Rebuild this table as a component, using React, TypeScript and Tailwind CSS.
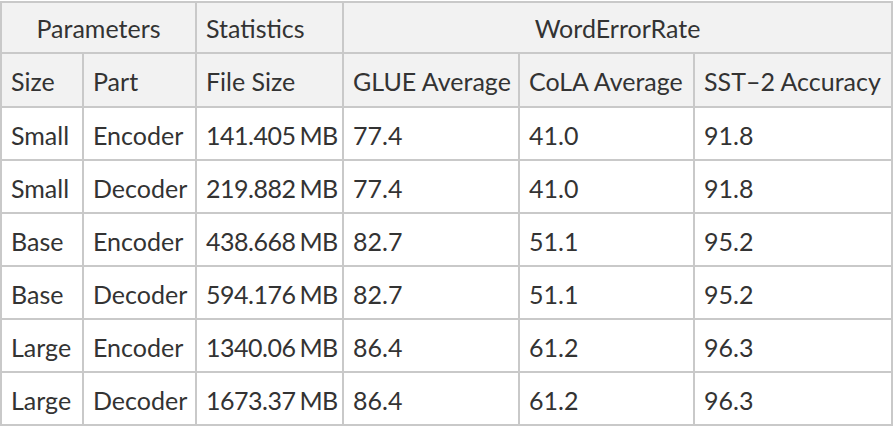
const rows = [
  ["Small", "Encoder", "141.405", "77.4", "41.0", "91.8"],
  ["Small", "Decoder", "219.882", "77.4", "41.0", "91.8"],
  ["Base", "Encoder", "438.668", "82.7", "51.1", "95.2"],
  ["Base", "Decoder", "594.176", "82.7", "51.1", "95.2"],
  ["Large", "Encoder", "1340.06", "86.4", "61.2", "96.3"],
  ["Large", "Decoder", "1673.37", "86.4", "61.2", "96.3"],
];

const cell = "flex items-center pl-[9px] pt-[4px] whitespace-nowrap";

export default function App() {
  return (
    <div className="h-[426px] w-[896px] bg-white pt-[1px] font-['Lato',sans-serif] text-[25px] text-[#333333]">
      <div className="grid w-[893px] grid-cols-[80px_111px_145px_174px_173px_196px] grid-rows-[49px_52px_repeat(6,51px)] gap-[2px] bg-[#c9c9c9] p-[2px]">
        <div className="col-span-2 flex items-center justify-center bg-[#f2f2f2] pt-[2px]">Parameters</div>
        <div className={`${cell} bg-[#f2f2f2] !pt-[2px]`}>Statistics</div>
        <div className="col-span-3 flex items-center justify-center bg-[#f2f2f2] pt-[2px]">WordErrorRate</div>

        {["Size", "Part", "File Size", "GLUE Average", "CoLA Average", "SST–2 Accuracy"].map((h) => (
          <div key={h} className={`${cell} bg-[#f2f2f2]`}>
            {h}
          </div>
        ))}

        {rows.map((r, i) =>
          r.map((v, j) =>
            j === 2 ? (
              <div key={`${i}-${j}`} className={`${cell} bg-white tracking-[-0.5px]`}>
                {v}
                <span className="ml-[4px]">MB</span>
              </div>
            ) : (
              <div key={`${i}-${j}`} className={`${cell} bg-white`}>
                {v}
              </div>
            ),
          ),
        )}
      </div>
    </div>
  );
}
